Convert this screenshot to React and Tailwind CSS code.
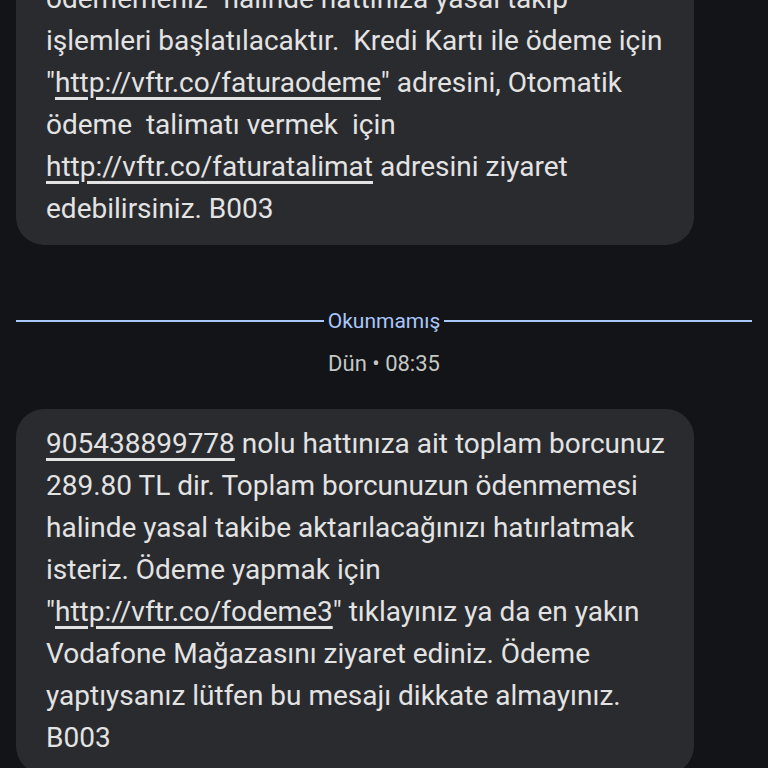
import React from "react";

const Link = ({ children }) => (
  <span className="underline decoration-[2.5px] underline-offset-[5px]">{children}</span>
);

const Bubble = ({ lines, className = "" }) => (
  <div className={`ml-4 w-[678px] rounded-[28px] bg-[#2a2b2f] px-[30px] ${className}`}>
    <div className="text-[28px] leading-[42px] text-[#e3e3e3] whitespace-pre">
      {lines.map((l, i) => (
        <div key={i}>{l}</div>
      ))}
    </div>
  </div>
);

export default function App() {
  const first = [
    <>ödememeniz "halinde hattınıza yasal takip</>,
    <>işlemleri başlatılacaktır.  Kredi Kartı ile ödeme için</>,
    <>"<Link>http://vftr.co/faturaodeme</Link>" adresini, Otomatik</>,
    <>ödeme  talimatı vermek  için</>,
    <><Link>http://vftr.co/faturatalimat</Link> adresini ziyaret</>,
    <>edebilirsiniz. B003</>,
  ];
  const second = [
    <><Link>905438899778</Link> nolu hattınıza ait toplam borcunuz</>,
    <>289.80 TL dir. Toplam borcunuzun ödenmemesi</>,
    <>halinde yasal takibe aktarılacağınızı hatırlatmak</>,
    <>isteriz. Ödeme yapmak için</>,
    <>"<Link>http://vftr.co/fodeme3</Link>" tıklayınız ya da en yakın</>,
    <>Vodafone Mağazasını ziyaret ediniz. Ödeme</>,
    <>yaptıysanız lütfen bu mesajı dikkate almayınız.</>,
    <>B003</>,
  ];
  return (
    <div className="h-[768px] w-[768px] overflow-hidden bg-[#131417] font-['Roboto',sans-serif]">
      <Bubble lines={first} className="-mt-[36px] pt-[14px] pb-[15px]" />
      <div className="mt-[64px] flex items-center px-4">
        <div className="h-[2px] flex-1 bg-[#a8c7fa]" />
        <span className="px-1 text-[21px] leading-[24px] text-[#a8c7fa]">Okunmamış</span>
        <div className="h-[2px] flex-1 bg-[#a8c7fa]" />
      </div>
      <div className="mt-[19px] text-center text-[22px] leading-[24px] text-[#c4c7c5]">Dün • 08:35</div>
      <Bubble lines={second} className="mt-[33px] pt-[14px] pb-[15px]" />
    </div>
  );
}
